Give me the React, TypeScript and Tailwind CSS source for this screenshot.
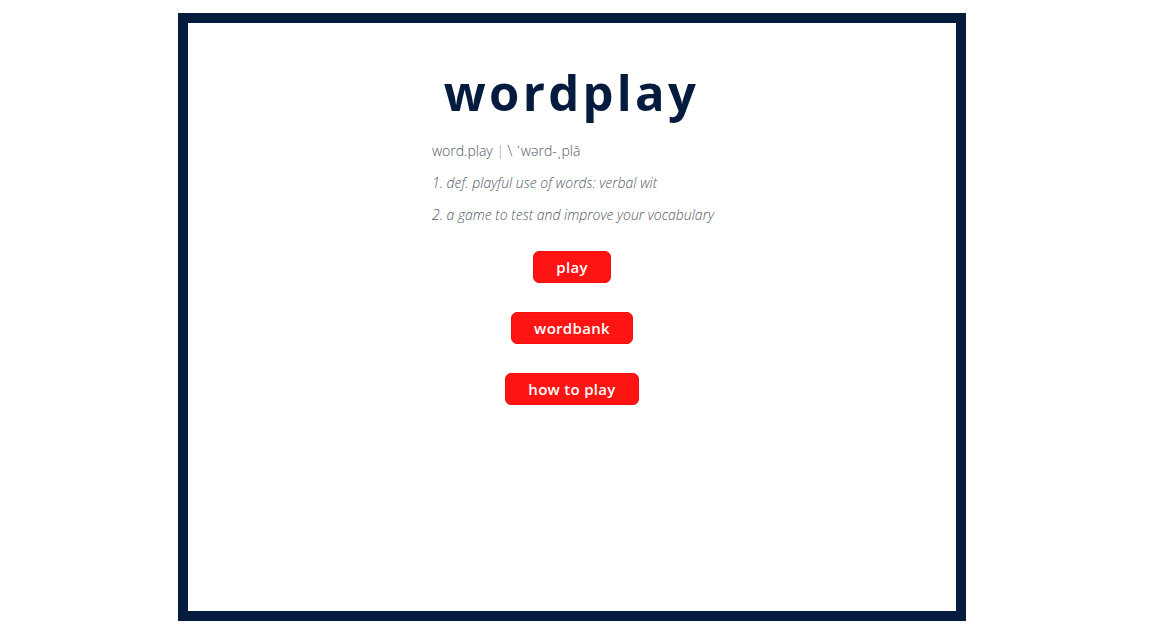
import React from "react";

const NAVY = "#061c3e";

const MenuButton = ({ label }: { label: string }) => (
  <button className="h-[32px] px-[22px] rounded-[6px] bg-[#ff1414] text-white text-[15px] font-semibold tracking-[0.3px] leading-none border border-[#f01010]">
    {label}
  </button>
);

const App = () => {
  return (
    <div className="min-h-[637px] bg-white" style={{ fontFamily: '"Open Sans", "Liberation Sans", sans-serif' }}>
      <div className="ml-[178px] pt-[13px]">
        <div className="w-[788px] h-[608px] border-[10px] border-[#061c3e] flex flex-col items-center">
          <h1 className="mt-[45px] text-[49px] font-bold tracking-[3.3px] leading-none mr-[1px]" style={{ color: NAVY }}>
            wordplay
          </h1>

          <div className="mt-[24px] ml-[2px] text-[14px] text-[#525a68] font-light">
            <p className="leading-[20px]">
              word.play <span className="text-[#8a93a2]">|</span> \ ˈwərd-ˌplā
            </p>
            <p className="mt-[12px] leading-[20px] italic">1. def. playful use of words: verbal wit</p>
            <p className="mt-[12px] leading-[20px] italic">2. a game to test and improve your vocabulary</p>
          </div>

          <div className="mt-[26px] flex flex-col items-center gap-[29px]">
            <MenuButton label="play" />
            <MenuButton label="wordbank" />
            <MenuButton label="how to play" />
          </div>
        </div>
      </div>
    </div>
  );
};

export default App;
